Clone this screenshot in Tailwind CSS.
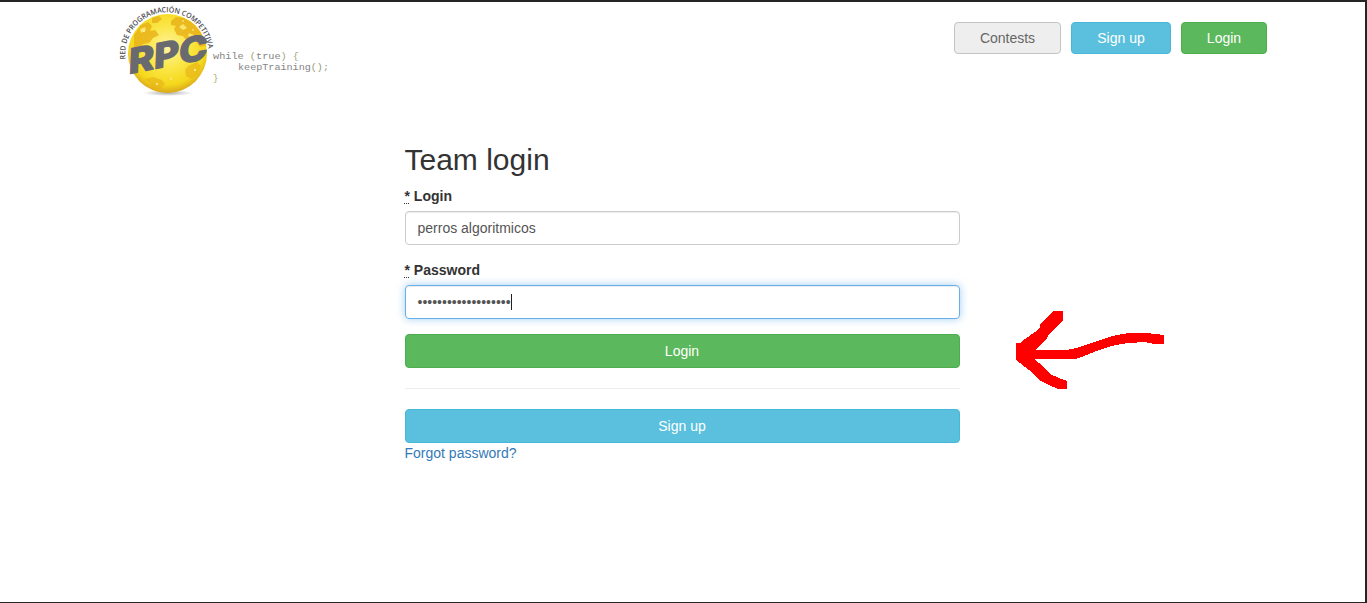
<!DOCTYPE html>
<html lang="en">
<head>
<meta charset="utf-8">
<title>Team login</title>
<script src="https://cdn.jsdelivr.net/npm/@tailwindcss/browser@4"></script>
</head>
<body class="h-[603px] w-[1367px] overflow-hidden bg-white font-['Liberation_Sans',Arial,sans-serif] text-[14px] leading-5 text-[#333]">
<div class="relative h-[603px] border-t-2 border-r-2 border-b border-[#252525]">
  <header class="flex h-[103px] items-start justify-between pr-[98px] pl-[115px]">
    <svg class="-mt-0.5 h-[103px] w-[220px]" viewBox="115 0 220 103" role="img" aria-label="RPC">
      <defs>
        <radialGradient id="gold" cx="50%" cy="42%" r="58%">
          <stop offset="0" stop-color="#fff3a0"/><stop offset=".45" stop-color="#fbe74a"/><stop offset=".82" stop-color="#f5d81c"/><stop offset="1" stop-color="#d9a81c"/>
        </radialGradient>
        <radialGradient id="shade"><stop offset="0" stop-color="#777" stop-opacity=".6"/><stop offset="1" stop-color="#777" stop-opacity="0"/></radialGradient>
        <clipPath id="ball"><circle cx="167.5" cy="53.5" r="39.5"/></clipPath>
        <path id="ring" d="M125.6 59.3A41.6 41.6 0 1 1 208.2 48.5"/>
      </defs>
      <ellipse cx="168" cy="93" rx="25" ry="3" fill="url(#shade)"/>
      <circle cx="167.5" cy="53.5" r="39.5" fill="url(#gold)"/>
      <g clip-path="url(#ball)" fill="#e8b31a">
        <path d="M134 35l7-10 7-3 4 4-2 5 5-1 4 5-6 3-4 5-6 1-4 5-5-1zM152 18l7-2 3 3-5 4-5 0zM171 21l5-4 8 1 11 6 8 11 4 10-7 2-5-7-7 2-5-6-6-1-3-6 2-3-5-1z" opacity=".85"/>
        <path d="M145 79l8-2 9 3 3 4-4 4-3 6-5-4-2-6zM188 66l9-4 4 4-3 8-7 5-5-3-1-6z" opacity=".65"/>
        <path d="M179 27l4-3 4 4-4 2zM189 33l5 2-1 3-5-2zM140 29l5-2 1 3-5 3z" fill="#fbe46a"/>
        <g fill="#fff6b8"><circle cx="144" cy="31" r="1"/><circle cx="183" cy="21" r=".8"/><circle cx="193" cy="30" r=".8"/><circle cx="157" cy="84" r=".9"/><circle cx="195" cy="70" r="1"/><circle cx="171" cy="79" r=".8"/></g>
      </g>
      <text transform="matrix(.97 -.19 -.04 1 128.5 74)" font-family="Inter, sans-serif" font-weight="800" font-size="34.5" textLength="81" lengthAdjust="spacingAndGlyphs" fill="#686a70" stroke="#686a70" stroke-width="1.3" stroke-linejoin="round">RPC</text>
      <text font-family="Open Sans, sans-serif" font-weight="600" font-size="7.4" fill="#4c4c50"><textPath href="#ring" textLength="131" lengthAdjust="spacingAndGlyphs">RED DE PROGRAMACIÓN COMPETITIVA</textPath></text>
      <g font-family="Liberation Mono, monospace" font-size="9" fill="#858585">
        <text x="213" y="59" textLength="86" lengthAdjust="spacingAndGlyphs">while <tspan fill="#a5a578">(</tspan>true<tspan fill="#a5a578">) {</tspan></text>
        <text x="238" y="70" textLength="91" lengthAdjust="spacingAndGlyphs">keepTraining<tspan fill="#999971">();</tspan></text>
        <text x="213" y="80.5" fill="#aaa95e">}</text>
      </g>
    </svg>
    <nav class="mt-5 flex gap-2.5">
      <a class="flex h-8 w-[107px] items-center justify-center rounded border border-[#c4c4c4] bg-[#eee] text-[#666]">Contests</a>
      <a class="flex h-8 w-[100px] items-center justify-center rounded border border-[#46b8da] bg-[#5bc0de] text-white">Sign up</a>
      <a class="flex h-8 w-[86px] items-center justify-center rounded border border-[#4cae4c] bg-[#5cb85c] text-white">Login</a>
    </nav>
  </header>
  <main class="ml-[404.5px] w-[555px] pt-[38px]">
    <h2 class="mb-2.5 text-[30px] leading-[33px]">Team login</h2>
    <label class="mb-[5px] block font-bold"><abbr class="underline decoration-dotted decoration-1 underline-offset-2 no-underline">*</abbr> Login</label>
    <div class="mb-[15px] flex h-[34px] items-center rounded border border-[#ccc] px-3 text-[#555] shadow-[inset_0_1px_1px_rgba(0,0,0,0.075)]">perros algoritmicos</div>
    <label class="mb-[5px] block font-bold"><abbr class="underline decoration-dotted decoration-1 underline-offset-2 no-underline">*</abbr> Password</label>
    <div class="mb-[15px] flex h-[34px] items-center rounded border border-[#66afe9] px-3 text-[#555] shadow-[inset_0_1px_1px_rgba(0,0,0,0.075),0_0_8px_rgba(102,175,233,0.6)]"><span>•••••••••••••••••••</span><span class="h-4 w-px bg-[#222]"></span></div>
    <button class="block h-[34px] w-full rounded border border-[#4cae4c] bg-[#5cb85c] text-white">Login</button>
    <hr class="my-5 border-[#eee]">
    <a class="flex h-[34px] items-center justify-center rounded border border-[#46b8da] bg-[#5bc0de] text-white">Sign up</a>
    <a class="block text-[#337ab7]">Forgot password?</a>
  </main>
  <svg class="absolute top-[298px] left-[1005px] h-[100px] w-[170px]" viewBox="0 0 170 100" fill="red" shape-rendering="crispEdges"><path d="M11 43H15L20 39L30 32L35 27V24L49 11H58V20L44 34L42 38L31 50H62L71 48L86 43L98 39L107 36L124 33H142L159 35V44H149L140 42L123 43L106 46L89 52L79 56L70 59H29L34 63L45 74L54 78L62 81V89H53L44 85L36 81L24 70L11 60Z"/></svg>
</div>
</body>
</html>
